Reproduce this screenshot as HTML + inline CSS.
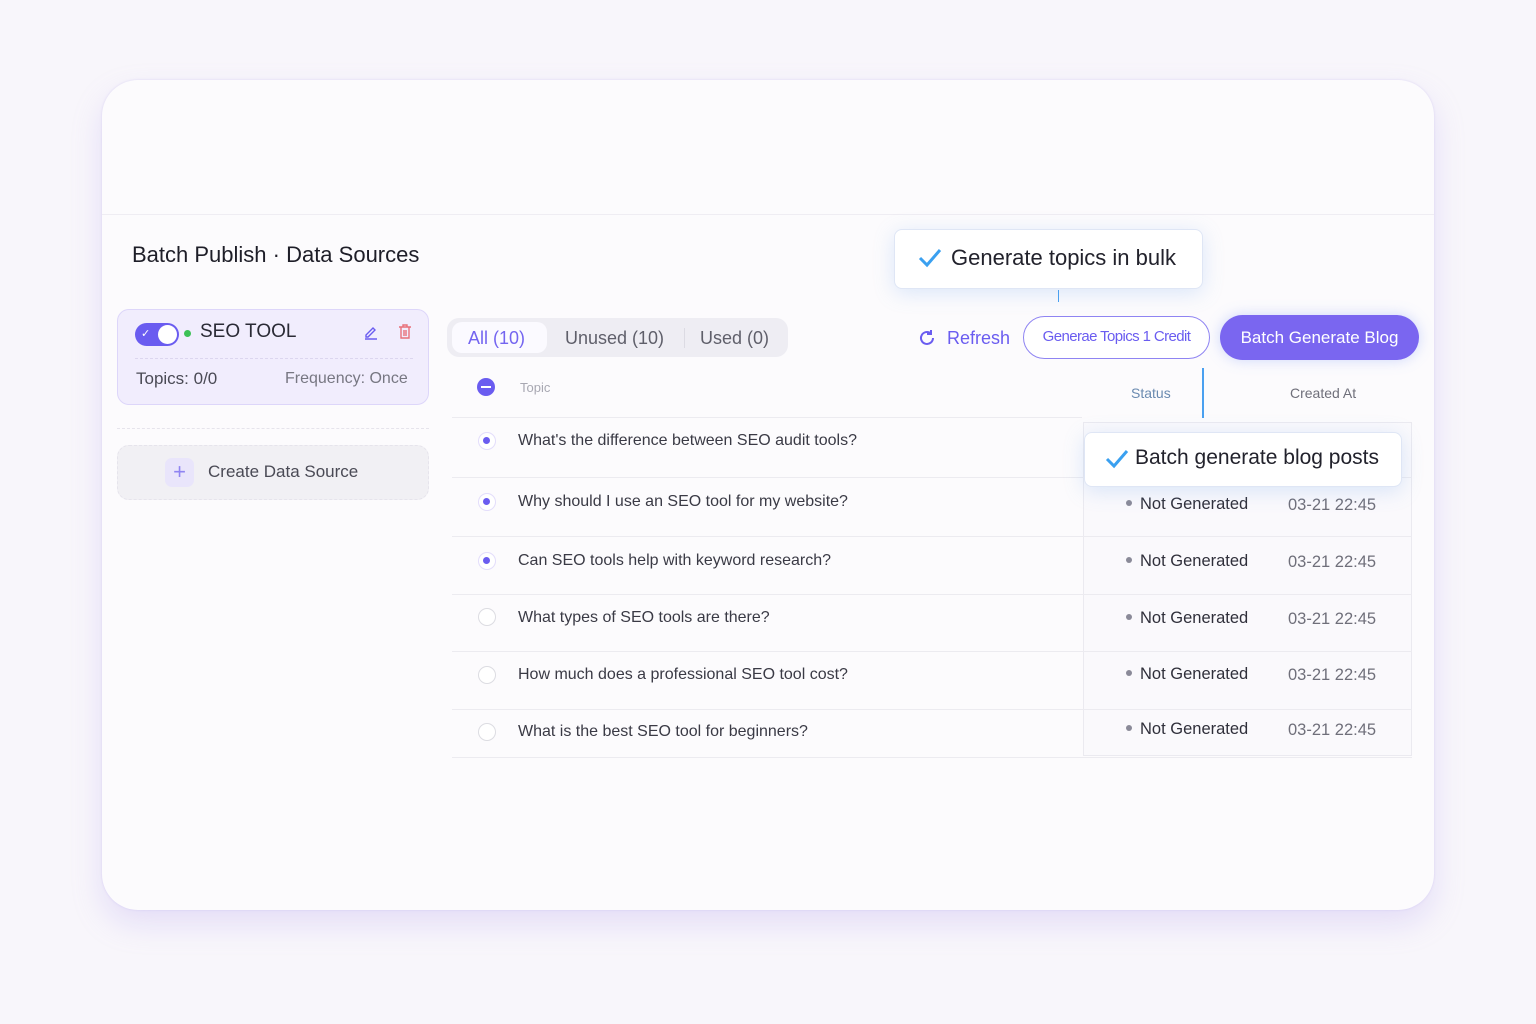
<!DOCTYPE html>
<html><head><meta charset="utf-8"><style>
*{box-sizing:border-box;margin:0;padding:0}
body{width:1536px;height:1024px;background:#f8f6fb;font-family:"Liberation Sans",sans-serif;position:relative;overflow:hidden;color:#2a2a35}
.a{position:absolute;white-space:nowrap}
.card{left:102px;top:80px;width:1332px;height:830px;background:#fcfbfd;border-radius:36px;box-shadow:0 14px 30px rgba(170,150,240,.25),0 0 2px rgba(200,190,240,.5)}
.hr{left:102px;top:214px;width:1332px;height:1px;background:#efedf3}
.row{left:452px;width:960px;height:1px;background:#ecebf0}
.q{left:518px;font-size:16px;color:#3a3a45}
.rad{left:478px;width:18px;height:18px;border-radius:50%;border:1.5px solid #dcdce2;background:#fff}
.rad.on{border-color:#e3ddfb;background:#fff}
.rad.on::after{content:"";position:absolute;left:4px;top:4px;width:7px;height:7px;border-radius:50%;background:#6a5cf0}
.st{left:1126px;font-size:16.5px;color:#2f2f3a}
.st::before{content:"";display:inline-block;width:6px;height:6px;border-radius:50%;background:#8a8a98;margin-right:8px;vertical-align:middle;position:relative;top:-2px}
.dt{left:1288px;font-size:16.5px;color:#6f6f7a}
.tip{background:#fff;border:1px solid #dfe6f5;border-radius:8px;box-shadow:0 4px 20px rgba(120,170,240,.25);font-size:21px;color:#22222c}
</style></head><body>
<div class="a card"></div>
<div class="a hr"></div>
<div class="a" style="left:132px;top:242px;font-size:22px;color:#1e1e28">Batch Publish · Data Sources</div>

<div class="a" style="left:117px;top:309px;width:312px;height:96px;background:#f1edfd;border:1px solid #ddd6fa;border-radius:12px"></div>
<div class="a" style="left:135px;top:323px;width:44px;height:23px;border-radius:12px;background:#6a5cf0"></div>
<div class="a" style="left:158px;top:325px;width:19px;height:19px;border-radius:50%;background:#fff"></div>
<div class="a" style="left:141px;top:327px;font-size:11px;color:#fff">✓</div>
<div class="a" style="left:184px;top:330px;width:7px;height:7px;border-radius:50%;background:#3cc156"></div>
<div class="a" style="left:200px;top:321px;font-size:19px;color:#2a2a35">SEO TOOL</div>
<svg class="a" style="left:363px;top:324px" width="16" height="16" viewBox="0 0 16 16"><path d="M3 11l7-7 2 2-7 7H3z M2 15h12" fill="none" stroke="#6a5cf0" stroke-width="1.4"/></svg>
<svg class="a" style="left:398px;top:324px" width="14" height="15" viewBox="0 0 14 15"><path d="M1 3h12M5 3V1h4v2M3 3v11h8V3M6 6v6M8 6v6" fill="none" stroke="#e8707a" stroke-width="1.4"/></svg>
<div class="a" style="left:135px;top:358px;width:278px;border-top:1px dashed #dcd6ef"></div>
<div class="a" style="left:136px;top:369px;font-size:17px;color:#4a4a55">Topics: 0/0</div>
<div class="a" style="left:285px;top:370px;font-size:16px;color:#777782">Frequency: Once</div>
<div class="a" style="left:117px;top:428px;width:312px;border-top:1px dashed #e6e4ec"></div>
<div class="a" style="left:117px;top:445px;width:312px;height:55px;background:#f1f0f4;border:1px dashed #e6e4ec;border-radius:12px"></div>
<div class="a" style="left:165px;top:458px;width:29px;height:29px;border-radius:7px;background:#e9e5fb;color:#8f84f2;font-size:22px;text-align:center;line-height:28px">+</div>
<div class="a" style="left:208px;top:462px;font-size:17px;color:#4a4a55">Create Data Source</div>

<div class="a" style="left:447px;top:318px;width:341px;height:39px;background:#eeedf3;border-radius:12px"></div>
<div class="a" style="left:452px;top:322px;width:95px;height:31px;background:#fbfaff;border-radius:10px"></div>
<div class="a" style="left:468px;top:328px;font-size:18px;color:#7465f0">All (10)</div>
<div class="a" style="left:565px;top:328px;font-size:18px;color:#5f5f6a">Unused (10)</div>
<div class="a" style="left:684px;top:328px;width:1px;height:20px;background:#dcdbe3"></div>
<div class="a" style="left:700px;top:328px;font-size:18px;color:#5f5f6a">Used (0)</div>

<div class="a" style="left:477px;top:378px;width:18px;height:18px;border-radius:50%;background:#6a5cf0"></div>
<div class="a" style="left:481px;top:386px;width:10px;height:2px;background:#fff"></div>
<div class="a" style="left:520px;top:380px;font-size:13px;color:#a8a8b2">Topic</div>
<div class="a" style="left:1131px;top:385px;font-size:14px;color:#6a8ab0">Status</div>
<div class="a" style="left:1290px;top:385px;font-size:14px;color:#6f6f7a">Created At</div>

<svg class="a" style="left:918px;top:329px" width="18" height="18" viewBox="0 0 18 18"><path d="M15 9a6 6 0 1 1-2-4.5M13 1v4h-4" fill="none" stroke="#6a5cf0" stroke-width="2"/></svg>
<div class="a" style="left:947px;top:328px;font-size:18px;color:#6a5cf0">Refresh</div>
<div class="a" style="left:1023px;top:316px;width:187px;height:43px;border:1.5px solid #8f84f2;border-radius:22px;background:#fff;font-size:15px;color:#6a5cf0;text-align:center;line-height:40px;letter-spacing:-.6px">Generae Topics 1 Credit</div>
<div class="a" style="left:1220px;top:315px;width:199px;height:45px;border-radius:23px;background:#7a66f0;font-size:17px;color:#fff;text-align:center;line-height:45px;box-shadow:0 0 14px rgba(120,150,250,.35)">Batch Generate Blog</div>

<div class="a tip" style="left:894px;top:229px;width:309px;height:60px"></div>
<svg class="a" style="left:918px;top:248px" width="24" height="20" viewBox="0 0 24 20"><path d="M2 10l7 7L22 2" fill="none" stroke="#3aa0f0" stroke-width="3"/></svg>
<div class="a" style="left:951px;top:245px;font-size:22px;color:#22222c">Generate topics in bulk</div>
<div class="a" style="left:1058px;top:290px;width:1px;height:12px;background:#4aa0f0"></div>
<div class="a" style="left:1202px;top:368px;width:2px;height:50px;background:#4aa0f0"></div>

<div class="a row" style="top:417px;width:630px"></div>
<div class="a" style="left:1083px;top:422px;width:329px;height:334px;border:1px solid #ebeaf0;background:#faf9fc"></div>
<div class="a row" style="top:477px"></div>
<div class="a row" style="top:536px"></div>
<div class="a row" style="top:594px"></div>
<div class="a row" style="top:651px"></div>
<div class="a row" style="top:709px"></div>
<div class="a row" style="top:757px"></div>

<div class="a rad on" style="top:432px"></div><div class="a q" style="top:432px">What's the difference between SEO audit tools?</div>
<div class="a rad on" style="top:493px"></div><div class="a q" style="top:493px">Why should I use an SEO tool for my website?</div>
<div class="a rad on" style="top:552px"></div><div class="a q" style="top:552px">Can SEO tools help with keyword research?</div>
<div class="a rad" style="top:608px"></div><div class="a q" style="top:609px">What types of SEO tools are there?</div>
<div class="a rad" style="top:666px"></div><div class="a q" style="top:666px">How much does a professional SEO tool cost?</div>
<div class="a rad" style="top:723px"></div><div class="a q" style="top:723px">What is the best SEO tool for beginners?</div>

<div class="a st" style="top:495px">Not Generated</div><div class="a dt" style="top:496px">03-21 22:45</div>
<div class="a st" style="top:552px">Not Generated</div><div class="a dt" style="top:553px">03-21 22:45</div>
<div class="a st" style="top:609px">Not Generated</div><div class="a dt" style="top:610px">03-21 22:45</div>
<div class="a st" style="top:665px">Not Generated</div><div class="a dt" style="top:666px">03-21 22:45</div>
<div class="a st" style="top:720px">Not Generated</div><div class="a dt" style="top:721px">03-21 22:45</div>

<div class="a tip" style="left:1084px;top:432px;width:318px;height:55px"></div>
<svg class="a" style="left:1105px;top:449px" width="24" height="20" viewBox="0 0 24 20"><path d="M2 10l7 7L22 2" fill="none" stroke="#3aa0f0" stroke-width="3"/></svg>
<div class="a" style="left:1135px;top:446px;font-size:21px;color:#22222c">Batch generate blog posts</div>
</body></html>
